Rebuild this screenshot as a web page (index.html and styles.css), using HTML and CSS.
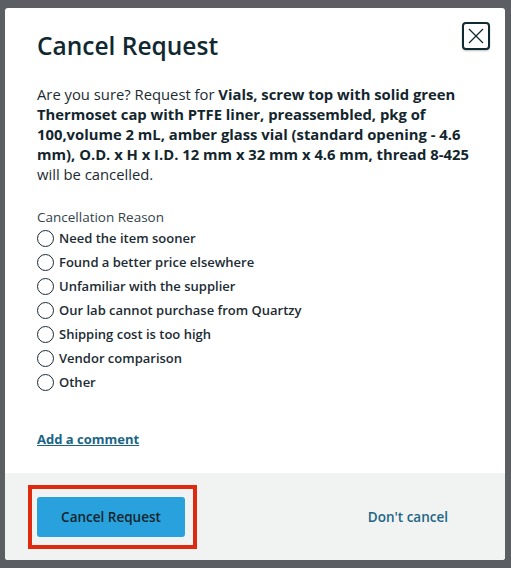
FILE: index.html
```html
<!DOCTYPE html>
<html lang="en">
<head>
  <meta charset="UTF-8">
  <title>Cancel Request</title>
  <link rel="stylesheet" href="styles.css">
</head>
<body>
  <div class="modal">
    <div class="modal-body">
      <div class="modal-head">
        <h1>Cancel Request</h1>
        <button class="close" aria-label="Close">
          <svg width="16" height="16" viewBox="0 0 16 16"><path d="M1 1L15 15M15 1L1 15" stroke="#0f2a33" stroke-width="1.3"/></svg>
        </button>
      </div>
      <p class="message">Are you sure? Request for <b>Vials, screw top with solid green Thermoset cap with PTFE liner, preassembled, pkg of 100,volume 2 mL, amber glass vial (standard opening - 4.6 mm), O.D. x H x I.D. 12 mm x 32 mm x 4.6 mm, thread 8-425</b> will be cancelled.</p>

      <div class="reasons">
        <div class="reasons-title">Cancellation Reason</div>
        <label class="reason"><span class="radio"></span>Need the item sooner</label>
        <label class="reason"><span class="radio"></span>Found a better price elsewhere</label>
        <label class="reason"><span class="radio"></span>Unfamiliar with the supplier</label>
        <label class="reason"><span class="radio"></span>Our lab cannot purchase from Quartzy</label>
        <label class="reason"><span class="radio"></span>Shipping cost is too high</label>
        <label class="reason"><span class="radio"></span>Vendor comparison</label>
        <label class="reason"><span class="radio"></span>Other</label>
      </div>

      <a class="comment" href="#">Add a comment</a>
    </div>
    <div class="modal-foot">
      <div class="highlight">
        <button class="primary">Cancel Request</button>
      </div>
      <a class="secondary" href="#">Don't cancel</a>
    </div>
  </div>
</body>
</html>
```

FILE: styles.css
```css
html, body {
  margin: 0;
  height: 100%;
}

body {
  background: #5b5f63;
  font-family: "Open Sans", "Noto Sans", sans-serif;
  color: #13252d;
  padding: 8px 6px 8px 5px;
  box-sizing: border-box;
}

.modal {
  width: 500px;
  height: 552px;
  background: #fff;
  border-radius: 3px;
  display: flex;
  flex-direction: column;
  overflow: hidden;
}

.modal-body {
  flex: 1;
  padding: 14px 15px 0 32px;
}

.modal-head {
  display: flex;
  justify-content: space-between;
  align-items: flex-start;
}

h1 {
  margin: 8px 0 0;
  font-size: 24.5px;
  line-height: 32px;
  font-weight: 600;
  color: #102830;
}

.close {
  width: 28px;
  height: 28px;
  border: 2px solid #0f2a33;
  border-radius: 4px;
  background: #fff;
  padding: 0;
  display: flex;
  align-items: center;
  justify-content: center;
  box-shadow: 0 1px 2px rgba(0, 0, 0, 0.25);
  cursor: pointer;
}

.message {
  margin: 22px 0 0;
  font-size: 14.8px;
  line-height: 20px;
  color: #1c2b33;
}

.message b {
  font-weight: 700;
  color: #13252d;
}

.reasons {
  margin-top: 24px;
}

.reasons-title {
  font-size: 13.5px;
  color: #33434b;
  line-height: 18px;
}

.reason {
  display: flex;
  align-items: center;
  height: 24px;
  font-size: 13px;
  font-weight: 600;
  color: #1c2b33;
}

.radio {
  width: 15px;
  height: 15px;
  border: 1px solid #1c2b33;
  border-radius: 50%;
  margin-right: 5px;
  flex: none;
}

.comment {
  display: inline-block;
  margin-top: 36px;
  font-size: 13px;
  font-weight: 700;
  color: #1a6585;
  text-decoration: underline;
}

.modal-foot {
  height: 87px;
  background: #f1f2f2;
  display: flex;
  align-items: center;
  justify-content: space-between;
  padding: 0 57px 0 23px;
}

.highlight {
  border: 4px solid #e02a10;
  padding: 8px 8px 8px 5px;
}

.primary {
  width: 148px;
  height: 40px;
  background: #28a1dc;
  border: none;
  border-radius: 3px;
  font-family: "Open Sans", "Noto Sans", sans-serif;
  font-size: 13.5px;
  font-weight: 600;
  color: #13252d;
  cursor: pointer;
}

.secondary {
  font-size: 13.5px;
  font-weight: 600;
  color: #1e6685;
  text-decoration: none;
}
```
